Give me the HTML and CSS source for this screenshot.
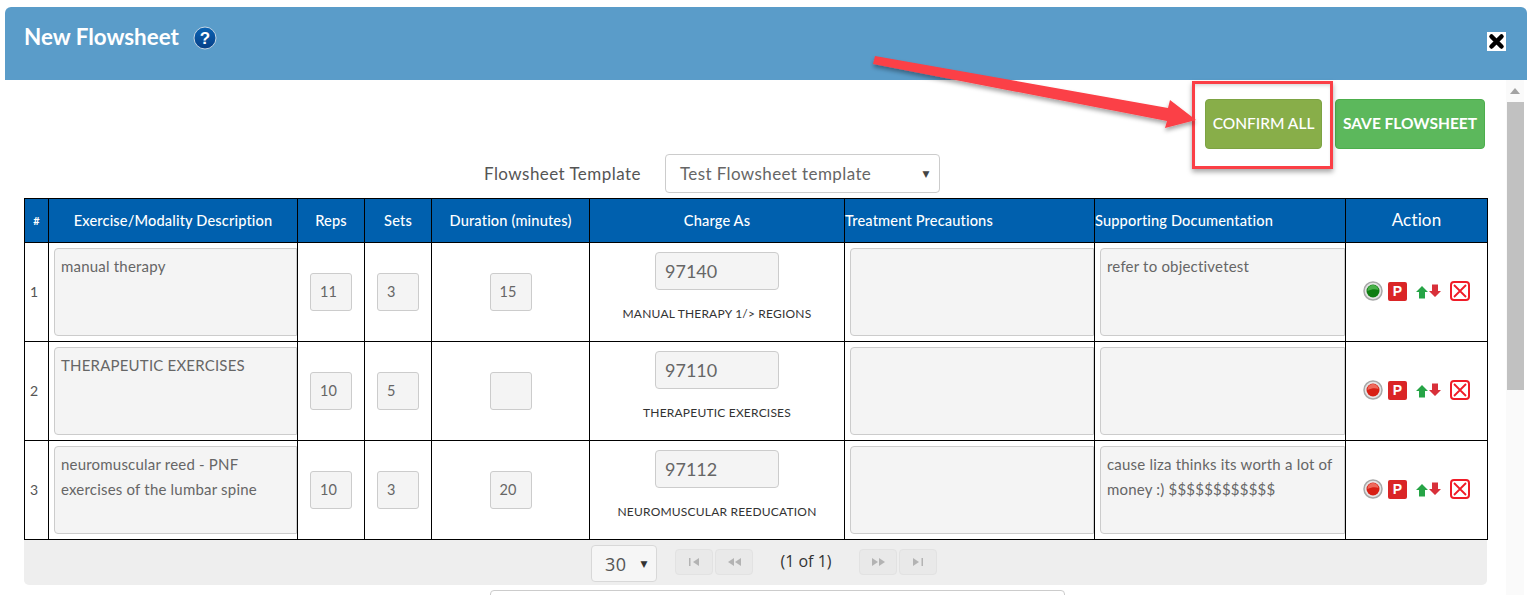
FILE: index.html
```html
<!DOCTYPE html>
<html lang="en">
<head>
<meta charset="utf-8">
<title>New Flowsheet</title>
<link rel="stylesheet" href="styles.css">
</head>
<body>
<div class="dialog">
  <header class="titlebar">
    <div class="title-group">
      <h1 class="title">New Flowsheet</h1>
      <svg class="help" width="24" height="24" viewBox="0 0 24 24">
        <defs><linearGradient id="hg" x1="0" y1="0" x2="0" y2="1"><stop offset="0" stop-color="#0a63b4"/><stop offset="1" stop-color="#073f86"/></linearGradient></defs>
        <circle cx="12" cy="12" r="11" fill="url(#hg)" stroke="#c5d6e4" stroke-width="1"/>
        <text x="12" y="18" text-anchor="middle" class="help-mark">?</text>
      </svg>
    </div>
    <svg class="close" width="19" height="19" viewBox="0 0 19 19">
      <rect width="19" height="19" fill="#fff"/>
      <path d="M4.500 4.500L14.500 14.500M14.500 4.500L4.500 14.500" stroke="#000" stroke-width="4.500" stroke-linecap="round"/>
    </svg>
  </header>
  <div class="dialog-body">
    <main class="content">
      <div class="actions">
        <button class="btn btn-confirm">CONFIRM ALL</button>
        <button class="btn btn-save">SAVE FLOWSHEET</button>
      </div>
      <div class="template-row">
        <label class="template-label">Flowsheet Template</label>
        <div class="template-select"><span>Test Flowsheet template</span><i class="caret">▼</i></div>
      </div>
      <table class="grid">
        <colgroup>
          <col class="c-num"><col class="c-desc"><col class="c-reps"><col class="c-sets"><col class="c-dur"><col class="c-charge"><col class="c-prec"><col class="c-doc"><col class="c-act">
        </colgroup>
        <thead>
          <tr>
            <th class="th-num">#</th>
            <th>Exercise/Modality Description</th>
            <th>Reps</th>
            <th>Sets</th>
            <th>Duration (minutes)</th>
            <th>Charge As</th>
            <th class="th-left">Treatment Precautions</th>
            <th class="th-left">Supporting Documentation</th>
            <th class="th-action">Action</th>
          </tr>
        </thead>
        <tbody>
          <tr>
            <td class="num">1</td>
            <td class="clip"><div class="area">manual therapy</div></td>
            <td><div class="small">11</div></td>
            <td><div class="small">3</div></td>
            <td><div class="small">15</div></td>
            <td class="charge"><div class="code">97140</div><div class="code-name">MANUAL THERAPY 1/&gt; REGIONS</div></td>
            <td class="clip"><div class="area"></div></td>
            <td class="clip"><div class="area">refer to objectivetest</div></td>
            <td>
              <div class="icons">
                <svg width="20" height="20" viewBox="0 0 20 20"><circle cx="10" cy="10" r="9" fill="#e6e6e6" stroke="#a8a8a8" stroke-width="1.5"/><circle cx="10" cy="10" r="6.5" fill="#0f7d12"/><path d="M4.5 10a5.5 5.5 0 0 1 11 -1c-3-1.500-7-1-11 1z" fill="#49b04a"/></svg>
                <span class="p-icon">P</span>
                <svg class="arrows" width="27" height="15" viewBox="0 0 27 15"><path d="M7 2L13 8H10V14.500H4V8H1z" fill="#26a446"/><path d="M20 13L14 7H17V0.500H23V7H26z" fill="#d8303a"/></svg>
                <svg width="20" height="20" viewBox="0 0 20 20"><rect x="1" y="1" width="18" height="18" rx="3" fill="#fff" stroke="#f01c28" stroke-width="2"/><path d="M4 4L16 16M16 4L4 16" stroke="#f01c28" stroke-width="1.800"/></svg>
              </div>
            </td>
          </tr>
          <tr>
            <td class="num">2</td>
            <td class="clip"><div class="area">THERAPEUTIC EXERCISES</div></td>
            <td><div class="small">10</div></td>
            <td><div class="small">5</div></td>
            <td><div class="small"></div></td>
            <td class="charge"><div class="code">97110</div><div class="code-name">THERAPEUTIC EXERCISES</div></td>
            <td class="clip"><div class="area"></div></td>
            <td class="clip"><div class="area"></div></td>
            <td>
              <div class="icons">
                <svg width="20" height="20" viewBox="0 0 20 20"><circle cx="10" cy="10" r="9" fill="#e6e6e6" stroke="#a8a8a8" stroke-width="1.5"/><circle cx="10" cy="10" r="6.5" fill="#d81f14"/><path d="M4.5 10a5.5 5.500 0 0 1 11 -1c-3-1.500-7-1-11 1z" fill="#ee6a5c"/></svg>
                <span class="p-icon">P</span>
                <svg class="arrows" width="27" height="15" viewBox="0 0 27 15"><path d="M7 2L13 8H10V14.500H4V8H1z" fill="#26a446"/><path d="M20 13L14 7H17V0.500H23V7H26z" fill="#d8303a"/></svg>
                <svg width="20" height="20" viewBox="0 0 20 20"><rect x="1" y="1" width="18" height="18" rx="3" fill="#fff" stroke="#f01c28" stroke-width="2"/><path d="M4 4L16 16M16 4L4 16" stroke="#f01c28" stroke-width="1.800"/></svg>
              </div>
            </td>
          </tr>
          <tr>
            <td class="num">3</td>
            <td class="clip"><div class="area">neuromuscular reed - PNF exercises of the lumbar spine</div></td>
            <td><div class="small">10</div></td>
            <td><div class="small">3</div></td>
            <td><div class="small">20</div></td>
            <td class="charge"><div class="code">97112</div><div class="code-name">NEUROMUSCULAR REEDUCATION</div></td>
            <td class="clip"><div class="area"></div></td>
            <td class="clip"><div class="area">cause liza thinks its worth a lot of money :) $$$$$$$$$$$$</div></td>
            <td>
              <div class="icons">
                <svg width="20" height="20" viewBox="0 0 20 20"><circle cx="10" cy="10" r="9" fill="#e6e6e6" stroke="#a8a8a8" stroke-width="1.5"/><circle cx="10" cy="10" r="6.5" fill="#d81f14"/><path d="M4.5 10a5.5 5.500 0 0 1 11 -1c-3-1.500-7-1-11 1z" fill="#ee6a5c"/></svg>
                <span class="p-icon">P</span>
                <svg class="arrows" width="27" height="15" viewBox="0 0 27 15"><path d="M7 2L13 8H10V14.500H4V8H1z" fill="#26a446"/><path d="M20 13L14 7H17V0.500H23V7H26z" fill="#d8303a"/></svg>
                <svg width="20" height="20" viewBox="0 0 20 20"><rect x="1" y="1" width="18" height="18" rx="3" fill="#fff" stroke="#f01c28" stroke-width="2"/><path d="M4 4L16 16M16 4L4 16" stroke="#f01c28" stroke-width="1.800"/></svg>
              </div>
            </td>
          </tr>
        </tbody>
      </table>
      <div class="pager">
        <div class="page-size"><span>30</span><i class="caret caret-dark">▼</i></div>
        <div class="page-btns">
          <span class="page-btn"><svg width="12" height="8" viewBox="0 0 12 8"><path d="M1 0h1.500v8H1zM11 0v8L5 4z"/></svg></span>
          <span class="page-btn"><svg width="13" height="8" viewBox="0 0 13 8"><path d="M6 0v8L0 4zM13 0v8L7 4z"/></svg></span>
        </div>
        <span class="page-report">(1 of 1)</span>
        <div class="page-btns">
          <span class="page-btn"><svg width="13" height="8" viewBox="0 0 13 8"><path d="M0 0v8l6-4zM7 0v8l6-4z"/></svg></span>
          <span class="page-btn"><svg width="12" height="8" viewBox="0 0 12 8"><path d="M1 0v8l6-4zM9.500 0H11v8H9.500z"/></svg></span>
        </div>
      </div>
      <div class="next-field"></div>
    </main>
    <aside class="scrollbar"><i class="scroll-up"></i><div class="scroll-thumb"></div></aside>
  </div>
  <div class="highlight-box"></div>
  <svg class="arrow" width="340" height="90" viewBox="0 0 340 90">
    <defs><filter id="sh" x="-5%" y="-20%" width="110%" height="150%"><feDropShadow dx="0" dy="3" stdDeviation="2" flood-color="#000" flood-opacity=".35"/></filter></defs>
    <path d="M5 3L3 11 L297 68 L295 75 L326 67 L300 47 L298 55 Z" fill="#fb3f46" filter="url(#sh)"/>
  </svg>
</div>
</body>
</html>
```
FILE: styles.css
```css
* { box-sizing: border-box; }
html, body { margin: 0; height: 595px; overflow: hidden; background: #fff; }
body { font-family: "Lato", "Noto Sans", sans-serif; color: #444; }

.dialog { position: relative; padding: 7px 4px 0 5px; }

.titlebar {
  height: 73px;
  background: #5a9cc9;
  border-radius: 6px 6px 0 0;
  display: flex;
  justify-content: space-between;
  padding: 18px 21px 0 19px;
}
.title-group { display: flex; align-items: flex-start; gap: 14px; }
.title { margin: 0; font-size: 22.4px; line-height: 23px; font-weight: 700; color: #fff; letter-spacing: 0; }
.help { margin-top: 1px; }
.help-mark { font: 700 17px "Liberation Sans", sans-serif; fill: #fff; }
.close { margin-top: 7px; }

.dialog-body { display: flex; height: 515px; overflow: hidden; }
.content { width: 1501px; padding: 19px 19px 0 19px; flex: none; }

.actions { display: flex; justify-content: flex-end; gap: 13px; padding-right: 2px; }
.btn {
  height: 50px;
  border-radius: 4px;
  border: 1px solid transparent;
  color: #fff;
  font: 500 15.5px "Lato", sans-serif;
  padding: 0 0 3px;
}
.btn-confirm { width: 117px; background: #88ae49; border-color: #7da343; }
.btn-save { width: 150px; background: #5cb85c; border-color: #4cae4c; font-weight: 700; }

.template-row { display: flex; align-items: center; gap: 24px; margin-top: 5px; padding-left: 460px; height: 39px; }
.template-label { font-size: 17px; color: #555; letter-spacing: .45px; }
.template-select {
  width: 275px; height: 39px; border: 1px solid #ccc; border-radius: 4px;
  display: flex; align-items: center; justify-content: space-between;
  padding: 0 9px 0 14px; font-size: 17px; color: #666; letter-spacing: .4px;
}
.caret { font-style: normal; font-size: 9px; color: #444; font-family: "DejaVu Sans", sans-serif; }

.grid { border-collapse: collapse; table-layout: fixed; width: 1463px; margin-top: 5px; }
.c-num { width: 24px; } .c-desc { width: 249px; } .c-reps { width: 67px; } .c-sets { width: 67px; }
.c-dur { width: 158px; } .c-charge { width: 255px; } .c-prec { width: 250px; } .c-doc { width: 251px; } .c-act { width: 142px; }
.grid th, .grid td { border: 1px solid #000; padding: 0; }
.grid thead tr { height: 44px; }
.grid tbody tr { height: 99px; }
.grid th { background: #0060ae; color: #fff; font-size: 14.6px; font-weight: 500; text-align: center; letter-spacing: .15px; }
.grid th.th-left { text-align: left; }
.grid th.th-action { font-size: 17px; font-weight: 400; padding-bottom: 2px; }
.grid th.th-num { font-size: 11px; font-weight: 700; }
.num { font-size: 14px; padding: 0 0 1px 5px !important; color: #555; }
.clip { overflow: hidden; padding: 5px 0 5px 5px !important; }
.area {
  height: 88px; width: 100%;
  background: #f4f4f4; border: 1px solid #ccc; border-radius: 4px 0 0 4px;
  padding: 5px 6px; font-size: 15px; line-height: 25px; color: #666; letter-spacing: .2px;
}
.small {
  width: 42px; height: 38px; margin: 0 auto;
  background: #f4f4f4; border: 1px solid #ccc; border-radius: 3px;
  font-size: 14.5px; line-height: 36px; padding-left: 9px; color: #666;
}
.charge { text-align: center; vertical-align: top; }
.code {
  width: 124px; height: 38px; margin: 9px auto 0;
  background: #f4f4f4; border: 1px solid #ccc; border-radius: 4px;
  font-size: 18px; line-height: 36px; text-align: left; padding-left: 9px; color: #666;
}
.code-name { margin-top: 16px; font-size: 12px; line-height: 16px; color: #333; letter-spacing: .2px; }

.icons { display: flex; align-items: center; justify-content: center; gap: 5px; padding-bottom: 2px; }
.p-icon {
  width: 19px; height: 19px; border-radius: 2px; background: #da2526; color: #fff;
  font: 700 14px/19px "Liberation Sans", sans-serif; text-align: center;
}
.arrows { margin: 0 3px; }

.pager {
  height: 45px; background: #eee; border-radius: 0 0 5px 5px; width: 1463px;
  display: flex; align-items: flex-start; padding: 5px 0 0 567px;
}
.page-size {
  width: 66px; height: 37px; background: #f6f6f6; border: 1px solid #d8d8d8; border-radius: 4px;
  display: flex; align-items: center; justify-content: space-between; padding: 0 8px 0 13px;
  font-size: 18px; color: #555; font-family: "Open Sans", sans-serif; letter-spacing: .5px;
}
.caret-dark { color: #333; }
.page-btns { display: flex; gap: 2px; margin-top: 4px; }
.page-size + .page-btns { margin-left: 18px; }
.page-btn {
  width: 38px; height: 26px; background: #e9e9e9; border: 1px solid #e2e2e2; border-radius: 4px;
  display: flex; align-items: center; justify-content: center; fill: #b3b3b3;
}
.page-report { width: 106px; text-align: center; font: 16px/26px "Open Sans", sans-serif; color: #333; margin-top: 3px; }

.next-field { margin: 5px 0 0 466px; width: 575px; height: 30px; border: 1px solid #ccc; border-radius: 4px; }

.scrollbar { width: 18px; background: #fafafa; flex: none; padding-top: 22px; position: relative; }
.scroll-up { position: absolute; top: 8px; left: 4px; border: 5px solid transparent; border-top: 0; border-bottom: 6px solid #a3a3a3; }
.scroll-thumb { height: 288px; width: 17px; margin-left: 1px; background: #c1c1c1; }

.highlight-box {
  position: absolute; left: 1192px; top: 81px; width: 141px; height: 88px;
  border: 3px solid #fb3f46; box-shadow: 0 3px 5px rgba(0,0,0,.35), inset 0 3px 4px -2px rgba(0,0,0,.2);
}
.arrow { position: absolute; left: 870px; top: 53px; }
```
